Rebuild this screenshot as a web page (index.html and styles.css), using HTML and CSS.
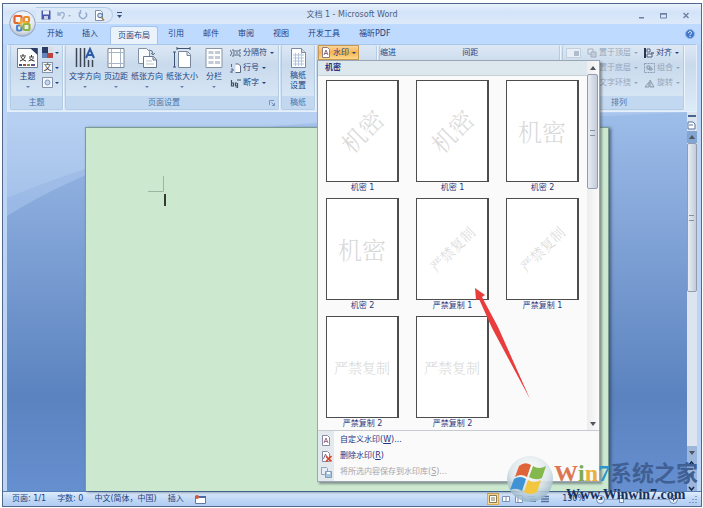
FILE: index.html
```html
<!DOCTYPE html>
<html lang="zh-CN">
<head>
    <meta charset="UTF-8">
    <meta name="viewport" content="width=device-width, initial-scale=1.0">
    <title>文档 1 - Microsoft Word</title>
    <link rel="stylesheet" href="styles.css">
</head>
<body>
<div class="window">
    <header class="titlebar">
        <button class="office" aria-label="Office">
            <svg width="27" height="27" viewBox="0 0 27 27">
                <defs>
                    <radialGradient id="orb" cx=".5" cy=".35" r=".65">
                        <stop offset="0" stop-color="#fff"/>
                        <stop offset=".7" stop-color="#e3e7ee"/>
                        <stop offset="1" stop-color="#a9b6ca"/>
                    </radialGradient>
                </defs>
                <circle cx="13.500" cy="13.500" r="12.800" fill="url(#orb)" stroke="#93a6c2"/>
                <g fill="none" stroke-width="2.200">
                    <rect x="5.500" y="6" width="7" height="7" rx="1" stroke="#e3632c"/>
                    <rect x="15" y="7" width="5" height="5" rx="1" stroke="#e98d31"/>
                    <rect x="8" y="15.500" width="4.500" height="5" rx="1" stroke="#4e86c8"/>
                    <rect x="14.500" y="14" width="6" height="6" rx="1" stroke="#8fb43c"/>
                    <path d="M12 8v9M9 12.500h9" stroke="#f4b53b" stroke-width="1.500"/>
                </g>
            </svg>
        </button>
        <div class="quick">
            <button aria-label="保存"><svg width="10" height="10" viewBox="0 0 10 10"><path d="M.5.5h9v9h-9z" fill="#4858a8"/><path d="M2 .5h6v4H2z" fill="#e8edfa"/><path d="M3 6h4v3.500H3z" fill="#c9cfe8"/></svg></button>
            <button aria-label="撤消"><svg width="15" height="10" viewBox="0 0 15 10"><path d="M1 2v3h3M1.500 5c2-4 7-3 5.500 1L5 9" fill="none" stroke="#9eb2d2" stroke-width="1.400"/><path d="M11 5h3l-1.500 2z" fill="#9eb2d2"/></svg></button>
            <button aria-label="恢复"><svg width="10" height="10" viewBox="0 0 10 10"><path d="M2.500 2.500a3.500 3.500 0 1 0 5 0M2.500 0v3h-2" fill="none" stroke="#93a9cd" stroke-width="1.400"/></svg></button>
            <button aria-label="打印预览"><svg width="11" height="11" viewBox="0 0 11 11"><path d="M1.500.5h5l2 2v8h-7z" fill="#fff" stroke="#7b8fae"/><circle cx="6" cy="5.500" r="2.300" fill="#cfe3f6" stroke="#51698f"/><path d="M7.500 7.500l2.500 3" stroke="#b4813c" stroke-width="1.500"/></svg></button>
        </div>
        <button class="more" aria-label="自定义快速访问工具栏"><svg width="5" height="6" viewBox="0 0 5 6"><path d="M0 0h5v1H0zM0 3h5L2.500 6z" fill="#33507f"/></svg></button>
        <h1>文档 1 - Microsoft Word</h1>
        <div class="controls">
            <button aria-label="最小化"><svg width="6" height="7" viewBox="0 0 6 7"><path d="M1 5h5v1.500H1z" fill="#6c819f"/></svg></button>
            <button aria-label="最大化"><svg width="7" height="7" viewBox="0 0 7 7"><path d="M.5 2h6v4h-6z" fill="none" stroke="#6c819f"/><path d="M0 1h7v1.500H0z" fill="#6c819f"/></svg></button>
            <button aria-label="关闭"><svg width="6" height="7" viewBox="0 0 6 7"><path d="M.5 1l5 5M5.500 1l-5 5" stroke="#6c819f" stroke-width="1.400"/></svg></button>
        </div>
    </header>

    <nav class="tabs">
        <button>开始</button>
        <button>插入</button>
        <button class="active">页面布局</button>
        <button>引用</button>
        <button>邮件</button>
        <button>审阅</button>
        <button>视图</button>
        <button>开发工具</button>
        <button>福昕PDF</button>
        <button class="help" aria-label="帮助"><svg width="10" height="10" viewBox="0 0 10 10"><circle cx="5" cy="5" r="4.500" fill="#3f78ce" stroke="#8fb3e8"/><path d="M3.500 4c0-2 3-2 3-.2C6.500 5 5 4.800 5 6.300M5 7v1" fill="none" stroke="#fff"/></svg></button>
    </nav>

    <div class="ribbon">
        <section class="group theme">
            <div class="tools">
                <button class="big">
                    <svg width="21" height="22" viewBox="0 0 21 22"><path d="M.5 1.500h20v19H.5z" fill="#fff" stroke="#6d7d93"/><path d="M13 1h7.500v7z" fill="#2c3e66"/><path d="M3 9h6M6 7v2M4 10q2 4 5 4M8 10q-1 3-5 4M12 10h5M14.500 8v2M12.500 11q2 3 5 3M16.500 11q-1 2-5 3" fill="none" stroke="#333"/><path d="M2 17h3v2H2z" fill="#36517c"/><path d="M6 17h3v2H6z" fill="#9b4e45"/><path d="M10 17h3v2h-3z" fill="#7d9355"/><path d="M14 17h4v2h-4z" fill="#65548a"/></svg>
                    <span>主题</span><i></i>
                </button>
                <div class="stack">
                    <button aria-label="颜色" class="drop"><svg width="11" height="11" viewBox="0 0 11 11"><path d="M0 0h6v6H0z" fill="#293d66"/><path d="M6 0h5v6H6z" fill="#d6dfe9"/><path d="M0 6h5v5H0z" fill="#6385bb"/><path d="M5 6h6v5H5z" fill="#b9453e"/></svg></button>
                    <button aria-label="字体" class="drop"><span class="boxed">文</span></button>
                    <button aria-label="效果" class="drop"><svg width="11" height="11" viewBox="0 0 11 11"><path d="M.5.5h10v10H.5z" fill="#f6f8fb" stroke="#8293ab"/><circle cx="5.500" cy="5.500" r="2.500" fill="#c6d6ec" stroke="#7c97bf"/></svg></button>
                </div>
            </div>
            <h2>主题</h2>
        </section>

        <section class="group setup">
            <div class="tools">
                <button class="big">
                    <svg width="21" height="22" viewBox="0 0 21 22"><path d="M1.500 1v19M5.500 1v19M9.500 1v19M13.500 13v7M17.500 13v7" stroke="#3d4654" stroke-width="1.500"/><path d="M11 11l4-9 4 9M13 8h4.500" fill="none" stroke="#2b5ba6" stroke-width="2"/></svg>
                    <span>文字方向</span><i></i>
                </button>
                <button class="big">
                    <svg width="18" height="22" viewBox="0 0 18 22"><path d="M1 1.500h16v19H1z" fill="#fff" stroke="#7d8794"/><path d="M4.500 2v18M13.500 2v18M1 5.500h16M1 16.500h16" stroke="#a5b4c6"/></svg>
                    <span>页边距</span><i></i>
                </button>
                <button class="big">
                    <svg width="20" height="22" viewBox="0 0 20 22"><path d="M1.500 1.500h8l3 3v12h-11z" fill="#f8fafc" stroke="#8290a3"/><path d="M6.500 9.500h10l3 3v8h-13z" fill="#fff" stroke="#66778f"/><path d="M16 9.500v3.500h3.500" fill="#cddbeb" stroke="#66778f"/><path d="M9 14h6M9 17h8" stroke="#b2bfcd"/><path d="M12 3q4 0 4 4m-2-1l2 2 2-2" fill="none" stroke="#617595"/></svg>
                    <span>纸张方向</span><i></i>
                </button>
                <button class="big">
                    <svg width="20" height="22" viewBox="0 0 20 22"><path d="M6.500 4.500h9l3 3v13h-12z" fill="#fff" stroke="#77869b"/><path d="M15 5v3.500h3.500" fill="#d8e2ed" stroke="#77869b"/><path d="M5 1.500h13M5 0v3M18 0v3M2.500 5v15M1 5h3M1 20h3" fill="none" stroke="#3e5475"/></svg>
                    <span>纸张大小</span><i></i>
                </button>
                <button class="big">
                    <svg width="18" height="22" viewBox="0 0 18 22"><path d="M1 1.500h16v19H1z" fill="#fff" stroke="#8793a2"/><path d="M3.500 4h5v3h-5zM10 4h5v3h-5zM3.500 9h5v3h-5zM10 9h5v3h-5zM3.500 14h5v3h-5zM10 14h5v3h-5z" fill="#c3ccd6"/></svg>
                    <span>分栏</span><i></i>
                </button>
                <div class="stack">
                    <button class="drop"><svg width="11" height="10" viewBox="0 0 11 10"><path d="M3 1v2h7V1M3 9V7h7v2M0 2l2 3-2 3M3 5h2M6 5h2M9 5h2" fill="none" stroke="#596b85"/></svg>分隔符</button>
                    <button class="drop"><svg width="11" height="10" viewBox="0 0 11 10"><path d="M1.500 1v3M1 6h2v2H1v2h2" fill="none" stroke="#596b85"/><path d="M5.500 1h3l2 2v6.500h-5" fill="#fff" stroke="#596b85"/></svg>行号</button>
                    <button class="drop"><svg width="11" height="10" viewBox="0 0 11 10"><path d="M1.500 2v6h2V5h-2M7 5H5.500v3h2V5v5h-2M7 2h4" fill="none" stroke="#424f62" stroke-width="1.200"/></svg>断字</button>
                </div>
            </div>
            <h2>页面设置<button class="launcher" aria-label="页面设置"><svg width="6" height="6" viewBox="0 0 6 6"><path d="M.5 5V.5H5M2.500 2.500l3 3M5.500 3v2.500H3" fill="none" stroke="#7794ba"/></svg></button></h2>
        </section>

        <section class="group paper">
            <div class="tools">
                <button class="big">
                    <svg width="17" height="22" viewBox="0 0 17 22"><path d="M1.500 1.500h10l4 4v15h-14z" fill="#fff" stroke="#7889a1"/><path d="M11.500 1.500v4h4" fill="#cfdbea" stroke="#7889a1"/><path d="M3 8h11M3 11h11M3 14h11M3 17h11M5.500 6v13M8.500 6v13M11.500 6v13" stroke="#b1c5dd"/></svg>
                    <span>稿纸<br>设置</span>
                </button>
            </div>
            <h2>稿纸</h2>
        </section>

        <section class="group background">
            <div class="tools">
                <button class="watermark-btn drop"><svg width="10" height="11" viewBox="0 0 10 11"><path d="M1.500.5h5l2 2v8h-7z" fill="#fff" stroke="#8b7f84"/><path d="M3 8l2-5 2 5M3.500 6.500h3" fill="none" stroke="#8d6f8a"/></svg>水印</button>
            </div>
            <h2>页面背景</h2>

            <div class="menu">
                <div class="gallery">
                    <div class="gallery-main">
                        <h3>机密</h3>
                        <div class="thumbs">
                            <button class="thumb"><span class="sheet"><b class="wide slant">机密</b></span>机密 1</button>
                            <button class="thumb"><span class="sheet"><b class="wide slant">机密</b></span>机密 1</button>
                            <button class="thumb"><span class="sheet"><b class="wide">机密</b></span>机密 2</button>
                            <button class="thumb"><span class="sheet"><b class="wide">机密</b></span>机密 2</button>
                            <button class="thumb"><span class="sheet"><b class="slant">严禁复制</b></span>严禁复制 1</button>
                            <button class="thumb"><span class="sheet"><b class="slant">严禁复制</b></span>严禁复制 1</button>
                            <button class="thumb"><span class="sheet"><b>严禁复制</b></span>严禁复制 2</button>
                            <button class="thumb"><span class="sheet"><b>严禁复制</b></span>严禁复制 2</button>
                        </div>
                    </div>
                    <div class="scroll">
                        <button class="up" aria-label="向上"></button>
                        <div class="grip"></div>
                        <button class="down" aria-label="向下"></button>
                    </div>
                </div>
                <div class="commands">
                    <button><svg width="11" height="11" viewBox="0 0 11 11"><path d="M1.500.5h5l2 2v8h-7z" fill="#fff" stroke="#8789a6"/><path d="M3 8l2-5 2 5M3.500 6.500h3" fill="none" stroke="#a16d86"/></svg><span>自定义水印(<u>W</u>)...</span></button>
                    <button><svg width="11" height="11" viewBox="0 0 11 11"><path d="M1.500.5h5l2 2v8h-7z" fill="#fff" stroke="#8789a6"/><path d="M2.500 8l2-5 2 5" fill="none" stroke="#7d7391"/><path d="M5 5l5.500 5.500M10.500 5L5 10.500" stroke="#d9472f" stroke-width="1.700"/></svg><span>删除水印(<u>R</u>)</span></button>
                    <button disabled><svg width="11" height="11" viewBox="0 0 11 11"><path d="M.5.5h5l1 1v6h-6z" fill="#e7eef6" stroke="#8da5c1"/><path d="M4.500 4.500h6v6h-6z" fill="#a9c3df" stroke="#7f9dc0"/><path d="M6 5h3v2H6z" fill="#fff"/></svg><span>将所选内容保存到水印库(<u>S</u>)...</span></button>
                </div>
                <svg class="arrow" width="56" height="112" viewBox="0 0 56 112"><path d="M0 0l10 7-3 2 16 30 32 72-38-71L4 11l-3 1z" fill="#e93c3c"/></svg>
            </div>
        </section>

        <section class="group paragraph">
            <div class="tools"><span>缩进</span><span>间距</span></div>
            <h2>段落</h2>
        </section>

        <section class="group arrange">
            <div class="tools">
                <button class="position" disabled aria-label="位置"><svg width="15" height="10" viewBox="0 0 15 10"><path d="M.5.5h14v9H.5z" fill="#e7eef6" stroke="#c3cfdd"/><path d="M8 3h5v5H8z" fill="#aebccd"/></svg></button>
                <div class="stack">
                    <button class="drop" disabled><svg width="10" height="10" viewBox="0 0 10 10"><path d="M1 1h5v5H1z" fill="#dfe6ee" stroke="#a2afbe"/><path d="M4 4h5v5H4z" fill="#c2ccd8" stroke="#a2afbe"/></svg>置于顶层</button>
                    <button class="drop" disabled><svg width="10" height="10" viewBox="0 0 10 10"><path d="M4 4h5v5H4z" fill="#dfe6ee" stroke="#a2afbe"/></svg>置于底层</button>
                    <button class="drop" disabled><svg width="10" height="10" viewBox="0 0 10 10"><path d="M0 2h10M0 5h10M0 8h10" stroke="#a2afbe"/></svg>文字环绕</button>
                </div>
                <div class="stack">
                    <button class="drop"><svg width="10" height="10" viewBox="0 0 10 10"><path d="M1 0v10" stroke="#29364e" stroke-width="2"/><path d="M3 1h3v3H3zM3 6h5v3H3z" fill="#e9eff6" stroke="#4b5f80"/><path d="M10 5H7" stroke="#29364e"/></svg>对齐</button>
                    <button class="drop" disabled><svg width="11" height="10" viewBox="0 0 11 10"><path d="M.5.5h10v9H.5z" fill="none" stroke="#8998ac" stroke-dasharray="2 1"/><path d="M3 3h3v3H3zM5 5h3v2H5z" fill="#c7d1dd" stroke="#8998ac"/></svg>组合</button>
                    <button class="drop" disabled><svg width="11" height="10" viewBox="0 0 11 10"><path d="M1 9h4V4zM6 9h4L6 2z" fill="#d0d8e2" stroke="#8998ac"/></svg>旋转</button>
                </div>
            </div>
            <h2>排列</h2>
        </section>
    </div>

    <main class="workspace">
        <svg class="swoosh" viewBox="0 0 680 379" preserveAspectRatio="none">
            <path d="M0 86Q90 48 190 25T680 0V379H0z" fill="#7fa5dc" fill-opacity=".25"/>
            <path d="M0 104Q50 72 120 46T680 0V379H0z" fill="url(#deep)"/>
            <defs><linearGradient id="deep" x1="0" y1="0" x2="0" y2="1"><stop offset="0" stop-color="#9dbde9"/><stop offset=".3" stop-color="#83a5d8"/><stop offset=".75" stop-color="#5b83bf"/><stop offset="1" stop-color="#668fd0"/></linearGradient></defs>
        </svg>
        <div class="page">
            <svg width="20" height="32" viewBox="0 0 20 32"><path d="M0 15.500h15.500V0" fill="none" stroke="#9db5a1"/><path d="M17 18v12" stroke="#333b34" stroke-width="2"/></svg>
        </div>
        <div class="side">
            <button class="split" aria-label="拆分"></button>
            <button class="ruler" aria-label="标尺"><svg width="9" height="10" viewBox="0 0 9 10"><path d="M1 2h5l2 2v5H1z" fill="#fff" stroke="#56729d"/><path d="M3 4v2M5 4v2" stroke="#56729d"/></svg></button>
            <button class="up" aria-label="向上"></button>
            <div class="grip"></div>
            <button class="down" aria-label="向下"></button>
            <button class="jump" aria-label="浏览对象"><svg width="7" height="31" viewBox="0 0 7 31"><path d="M1 5l2.500-3L6 5M1 27l2.500 3L6 27" fill="none" stroke="#17284b" stroke-width="1.500"/><circle cx="3.500" cy="15" r="2.500" fill="#4e6f9f"/></svg></button>
        </div>
    </main>

    <footer class="status">
        <span>页面: 1/1</span>
        <span>字数: 0</span>
        <span>中文(简体，中国)</span>
        <span>插入</span>
        <svg width="11" height="9" viewBox="0 0 11 9"><path d="M.5 1.500h10v7H.5z" fill="#fff" stroke="#66779f"/><path d="M4 1h7v2H4z" fill="#4d68a4"/><circle cx="2" cy="2" r="2" fill="#d2553c"/></svg>
        <div class="views">
            <button class="on" aria-label="页面视图"><svg width="8" height="8" viewBox="0 0 8 8"><path d="M.5.5h7v7h-7zM2 3h4M2 5h4" fill="#fff" stroke="#8a7a58"/></svg></button>
            <button aria-label="阅读版式"><svg width="8" height="8" viewBox="0 0 8 8"><path d="M.5 1.500h7v5h-7zM4 1v6" fill="#fff" stroke="#7a91b4"/></svg></button>
            <button aria-label="Web 版式"><svg width="8" height="8" viewBox="0 0 8 8"><path d="M.5.5h7v7h-7zM3 1v6" fill="#fff" stroke="#7a91b4"/></svg></button>
            <button aria-label="大纲视图"><svg width="8" height="8" viewBox="0 0 8 8"><path d="M0 1.500h6M2 4h6M2 6.500h6" stroke="#55709b"/></svg></button>
            <button aria-label="草稿"><svg width="8" height="8" viewBox="0 0 8 8"><path d="M0 1.500h8M0 4h8M0 6.500h8" stroke="#55709b" stroke-width="1.400"/></svg></button>
        </div>
        <label for="zoom">130%</label>
        <div class="zoom">
            <button aria-label="缩小"><svg width="9" height="9" viewBox="0 0 9 9"><circle cx="4.500" cy="4.500" r="4" fill="#e6effa" stroke="#6f8cb8"/><path d="M2.500 4.500h4" stroke="#3f5f92"/></svg></button>
            <input id="zoom" type="range" min="10" max="500" value="130">
            <button aria-label="放大"><svg width="9" height="9" viewBox="0 0 9 9"><circle cx="4.500" cy="4.500" r="4" fill="#e6effa" stroke="#6f8cb8"/><path d="M2.500 4.500h4M4.500 2.500v4" stroke="#3f5f92"/></svg></button>
        </div>
        <svg width="8" height="8" viewBox="0 0 8 8"><path d="M7 1v1M7 4v1M4 4v1M7 7v1M4 7v1M1 7v1" stroke="#7f9bc4" stroke-width="2"/></svg>
    </footer>

    <div class="brand">
        <svg width="48" height="48" viewBox="0 0 48 48">
            <defs>
                <radialGradient id="globe" cx=".5" cy=".3" r=".7">
                    <stop offset="0" stop-color="#fff" stop-opacity=".95"/>
                    <stop offset=".6" stop-color="#dbe4e8" stop-opacity=".9"/>
                    <stop offset="1" stop-color="#8eafc8" stop-opacity=".85"/>
                </radialGradient>
            </defs>
            <circle cx="24" cy="24" r="23" fill="url(#globe)"/>
            <path d="M13 11q6-5 12-1l-4 12q-6-4-12 0z" fill="#e0643a"/>
            <path d="M27 11q6 4 13 0l-4 12q-6 3-13-1z" fill="#84b84c"/>
            <path d="M8 24q6-4 12 0l-4 12q-6-4-12-1z" fill="#3f93d4"/>
            <path d="M22 25q6 4 13 0l-4 12q-6 4-13 0z" fill="#f3c63f"/>
        </svg>
        <div>
            <p class="name"><span class="w">W</span><span class="i">i</span><span class="n">n</span><span class="seven">7</span>系统之家</p>
            <p class="url">Www.Winwin7.com</p>
        </div>
    </div>
</div>
</body>
</html>
```

FILE: styles.css
```css
* {
    box-sizing: border-box;
}
body {
    margin: 0;
    padding: 3px 1px 1px 2px;
    height: 100vh;
    background: #fff;
    color: #1d427f;
    font: 8px/12px "DejaVu Sans", "Noto Sans CJK SC", sans-serif;
}
button {
    display: flex;
    align-items: center;
    margin: 0;
    padding: 0;
    border: 0;
    background: none;
    color: inherit;
    font: inherit;
    white-space: nowrap;
}
h1, h2, h3, p {
    margin: 0;
    font: inherit;
}
svg {
    display: block;
    flex: none;
}
.window {
    position: relative;
    display: flex;
    flex-direction: column;
    height: 100%;
    border: 1px solid #50698b;
    background: #bcd5f6;
}

/* title bar */
.titlebar {
    display: flex;
    align-items: center;
    height: 20px;
    flex: none;
    padding: 2px 12px 0 6px;
    background: linear-gradient(#e9f2fd, #d3e3f8 40%, #dce9fa);
}
.office {
    align-self: flex-start;
    padding-top: 4px;
    z-index: 1;
}
.quick {
    display: flex;
    align-items: center;
    gap: 6px;
    height: 16px;
    padding: 0 7px 0 5px;
    border: 1px solid #b5cbe8;
    border-left: 0;
    border-radius: 0 8px 8px 0;
    background: #dce9f9;
}
.more {
    margin-left: 4px;
}
.titlebar h1 {
    flex: 1;
    padding-right: 56px;
    text-align: center;
    color: #4b5f80;
}
.controls {
    display: flex;
    gap: 16px;
}

/* tabs */
.tabs {
    display: flex;
    height: 20px;
    flex: none;
    padding: 0 6px 0 34px;
    background: #bfdaff;
}
.tabs button {
    padding: 0 9px 0 10px;
}
.tabs .active {
    margin: 2px 0 0 3px;
    padding: 0 7px;
    border: 1px solid #a5c3ea;
    border-bottom: 0;
    border-radius: 3px 3px 0 0;
    background: #eaf2fb;
}
.tabs .help {
    margin-left: auto;
    padding: 0;
}

/* ribbon */
.ribbon {
    display: flex;
    gap: 2px;
    height: 68px;
    flex: none;
    margin: 0 4px;
    padding: 0 12px 1px 2px;
    border: 1px solid #e4effa;
    border-top-color: #a9c6ea;
    background: linear-gradient(#dde8f4, #c9daed 30%, #dcebf8);
}
.group {
    display: flex;
    flex-direction: column;
    border: 1px solid #b3cbe3;
    border-top: 0;
    border-radius: 2px;
    box-shadow: 1px 0 #edf4fb;
}
.group h2 {
    display: flex;
    align-items: center;
    justify-content: center;
    height: 13px;
    background: #c1d8f0;
    color: #4c74ab;
}
.tools {
    display: flex;
    flex: 1;
    align-items: flex-start;
}
.big {
    flex-direction: column;
    padding-top: 2px;
}
.big span {
    padding-top: 2px;
}
.big i {
    margin-top: 3px;
    border: 2px solid transparent;
    border-top-color: #6480a9;
    border-bottom: 0;
}
.stack {
    display: flex;
    flex-direction: column;
}
.stack button {
    height: 15px;
    gap: 2px;
}
.drop::after {
    content: "";
    margin-left: 1px;
    border: 2px solid transparent;
    border-top-color: currentColor;
    border-bottom: 0;
}
button:disabled {
    color: #98a5b6;
}
.theme {
    width: 53px;
}
.theme .tools {
    gap: 4px;
    padding-left: 6px;
}
.theme .stack .drop::after {
    margin-left: 0;
}
.boxed {
    width: 11px;
    height: 11px;
    border: 1px solid #8293ab;
    background: #f6f8fb;
    color: #333;
    line-height: 9px;
    text-align: center;
}
.setup {
    width: 214px;
}
.setup .tools {
    gap: 3px;
    padding-left: 3px;
}
.setup .big:nth-child(5) {
    padding-left: 4px;
    padding-right: 4px;
}
.setup h2 {
    position: relative;
    padding-right: 16px;
}
.launcher {
    position: absolute;
    right: 3px;
}
.paper {
    width: 34px;
}
.paper .tools {
    justify-content: center;
}
.paper .big span {
    line-height: 10px;
}
.background {
    position: relative;
    width: 60px;
}
.watermark-btn {
    height: 15px;
    gap: 2px;
    padding: 0 2px;
    border: 1px solid #c49a55;
    background: linear-gradient(#fbd49b, #f8b251 50%, #fcd98a);
}
.paragraph {
    flex: 1;
}
.paragraph .tools {
    padding-top: 2px;
}
.paragraph span {
    width: 46%;
}
.arrange {
    width: 122px;
}
.arrange .tools {
    gap: 6px;
    padding-left: 3px;
}
.arrange h2 {
    padding-right: 8px;
}
.position {
    height: 15px;
}

/* watermark menu */
.menu {
    position: absolute;
    top: 15px;
    left: -1px;
    z-index: 2;
    width: 283px;
    border: 1px solid #9ba5b4;
    background: #fafafa;
    box-shadow: 2px 2px 2px rgba(60, 70, 80, 0.5);
    color: #26357f;
}
.gallery {
    display: flex;
    border-bottom: 1px solid #c8ccd2;
}
.gallery-main {
    flex: 1;
}
.gallery h3 {
    height: 15px;
    padding-left: 7px;
    border-bottom: 1px solid #c8d0d8;
    background: #dde7ee;
    font-weight: bold;
    line-height: 14px;
}
.thumbs {
    display: grid;
    grid-template-columns: repeat(3, 73px);
    gap: 4px 17px;
    padding: 4px 8px 0;
}
.thumb {
    flex-direction: column;
}
.sheet {
    display: flex;
    align-items: center;
    justify-content: center;
    width: 73px;
    height: 102px;
    border: 1px solid #4d4d4d;
    border-right-width: 2px;
    background: #fff;
    color: #d9d9d9;
}
.sheet b {
    font: 300 14px/20px "Noto Serif CJK SC", "Noto Sans CJK SC", serif;
}
.sheet .wide {
    font-size: 24px;
}
.sheet .slant {
    transform: rotate(-45deg);
}
.scroll {
    display: flex;
    flex-direction: column;
    width: 12px;
    background: linear-gradient(90deg, #ededef, #fafafa);
}
.up, .down {
    justify-content: center;
    height: 13px;
}
.up::after, .down::after {
    content: "";
    border: 3px solid transparent;
    border-top: 0;
    border-bottom: 4px solid #50545c;
}
.down {
    margin-top: auto;
}
.down::after {
    border-top: 4px solid #50545c;
    border-bottom: 0;
}
.grip {
    border: 1px solid #929cae;
    border-radius: 2px;
    background: linear-gradient(90deg, #e9edf4, #c3cbda);
}
.grip::after {
    content: "";
    display: block;
    width: 5px;
    height: 4px;
    margin: 55px auto 0;
    border: 1px solid #8590a4;
    border-width: 1px 0;
}
.scroll .grip {
    height: 115px;
    margin-right: 1px;
}
.commands {
    padding: 1px 0;
    background: linear-gradient(90deg, #e4e9ee 16px, #fafafa 16px);
}
.commands button {
    gap: 8px;
    width: 100%;
    height: 16px;
    padding-left: 3px;
}
.commands span {
    flex: 1;
    text-align: left;
}
.commands button:disabled {
    color: #a5a5aa;
}
.arrow {
    position: absolute;
    left: 157px;
    top: 227px;
}

/* document */
.workspace {
    position: relative;
    display: flex;
    flex: 1;
    margin: 0 4px;
    padding-top: 15px;
    background: linear-gradient(#b8d1f3, #9ebce5 120px);
}
.swoosh {
    position: absolute;
    top: 0;
    left: 0;
    width: 100%;
    height: 100%;
}
.page {
    position: relative;
    width: 76%;
    margin: 0 auto;
    padding: 48px 62px;
    border: 1px solid #7b9a91;
    border-bottom: 0;
    background: #cce8cf;
    box-shadow: 2px 1px 3px rgba(40, 60, 90, 0.7);
}
.side {
    position: relative;
    display: flex;
    flex-direction: column;
    width: 10px;
    margin-top: -15px;
    background: #dce5ef;
}
.split {
    height: 3px;
    margin: 2px 1px;
    border-bottom: 2px solid #496493;
}
.ruler {
    height: 12px;
}
.side .up {
    height: 12px;
    background: #83a5d2;
}
.side .grip {
    height: 149px;
}
.side .grip::after {
    margin-top: 71px;
}
.side .down {
    background: #9db7dc;
}
.jump {
    justify-content: center;
    height: 32px;
    background: #9db7dc;
}

/* status bar */
.status {
    display: flex;
    align-items: center;
    gap: 11px;
    height: 15px;
    flex: none;
    padding: 0 4px 0 9px;
    border-top: 1px solid #557eb5;
    background: linear-gradient(#dfecfb, #c1d8f6 50%, #b1cdf3);
    white-space: nowrap;
}
.views {
    display: flex;
    gap: 1px;
    margin-left: auto;
}
.views button {
    padding: 1px;
    border: 1px solid transparent;
}
.views .on {
    border-color: #d7aa58;
    background: #fbd891;
}
.zoom {
    display: flex;
    align-items: center;
}
.zoom input {
    width: 64px;
    height: 8px;
    margin: 0;
    appearance: none;
    background: linear-gradient(#8da9d0, #8da9d0) center / 100% 1px no-repeat;
}
.zoom input::-webkit-slider-thumb {
    appearance: none;
    width: 5px;
    height: 8px;
    border: 1px solid #7790b5;
    background: #edf3fb;
}

/* site badge */
.brand {
    position: absolute;
    right: 3px;
    bottom: 3px;
    z-index: 3;
    display: flex;
    align-items: center;
}
.name {
    display: flex;
    align-items: baseline;
    color: #405f93;
    font: bold 22px/28px "Noto Sans CJK SC", sans-serif;
}
.name span {
    font-family: "Liberation Serif", serif;
    font-size: 24px;
}
.name .w {
    color: #dc7652;
}
.name .i {
    color: #7cab55;
}
.name .n {
    color: #e7b13c;
}
.name .seven {
    color: #2c94cb;
}
.url {
    padding-left: 12px;
    color: #17315c;
    font: bold 14px/15px "Liberation Serif", serif;
}
```
